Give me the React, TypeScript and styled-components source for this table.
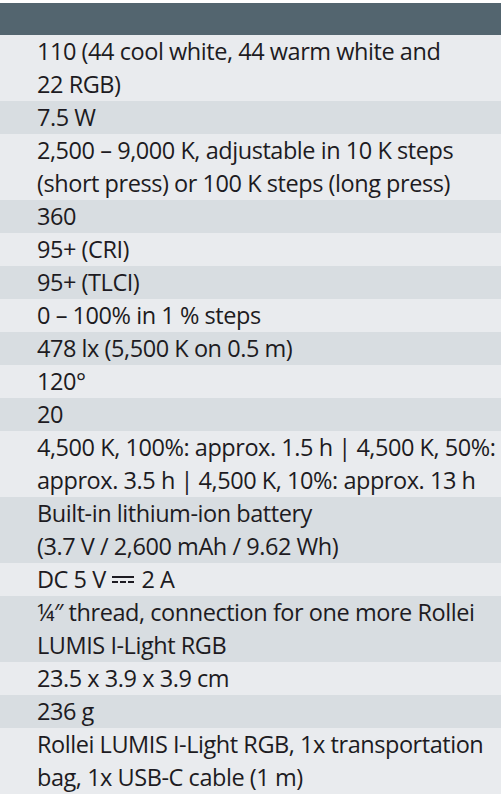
import React from 'react';
import styled, { createGlobalStyle } from 'styled-components';

const GlobalStyle = createGlobalStyle`
  html, body {
    margin: 0;
    padding: 0;
    background: #ffffff;
  }
`;

const Sheet = styled.div`
  width: 501px;
  padding-top: 3px;
  font-family: "Open Sans", "Noto Sans", sans-serif;
  font-stretch: 90%;
`;

const HeaderBar = styled.div`
  height: 32px;
  background: #53656f;
`;

type RowProps = {
    shaded: boolean
}

const SpecRow = styled.div`
  background: ${((props: RowProps) => props.shaded ? '#d8dde1' : '#e9ebee')};
  padding: 0 4px 0 37px;
  color: #1d1b22;
  font-size: 23.5px;
  line-height: 33px;
  letter-spacing: -0.45px;
  white-space: nowrap;
`;

// direct current sign: solid line over a dashed one
const DcSign = styled.span`
  display: inline-block;
  width: 22px;
  height: 3px;
  margin: 0 7px 0 1px;
  border-top: 2px solid #1d1b22;
  border-bottom: 2px dashed #1d1b22;
  vertical-align: 5px;
`;

const specs: React.ReactNode[][] = [
    ['110 (44 cool white, 44 warm white and', '22 RGB)'],
    ['7.5 W'],
    ['2,500 \u2013 9,000 K, adjustable in 10 K steps', '(short press) or 100 K steps (long press)'],
    ['360'],
    ['95+ (CRI)'],
    ['95+ (TLCI)'],
    ['0 \u2013 100% in 1 % steps'],
    ['478 lx (5,500 K on 0.5 m)'],
    ['120\u00b0'],
    ['20'],
    ['4,500 K, 100%: approx. 1.5 h | 4,500 K, 50%:', 'approx. 3.5 h | 4,500 K, 10%: approx. 13 h'],
    ['Built-in lithium-ion battery', '(3.7 V / 2,600 mAh / 9.62 Wh)'],
    [<>DC 5 V <DcSign />2 A</>],
    ['\u00bc\u2033 thread, connection for one more Rollei', 'LUMIS I-Light RGB'],
    ['23.5 x 3.9 x 3.9 cm'],
    ['236 g'],
    ['Rollei LUMIS I-Light RGB, 1x transportation', 'bag, 1x USB-C cable (1 m)'],
];

export default function App() {
    return (
        <>
            <GlobalStyle />
            <Sheet>
                <HeaderBar />
                {specs.map((lines, i) => (
                    <SpecRow key={i} shaded={i % 2 === 1}>
                        {lines.map((line, j) => <div key={j}>{line}</div>)}
                    </SpecRow>
                ))}
            </Sheet>
        </>
    );
}
